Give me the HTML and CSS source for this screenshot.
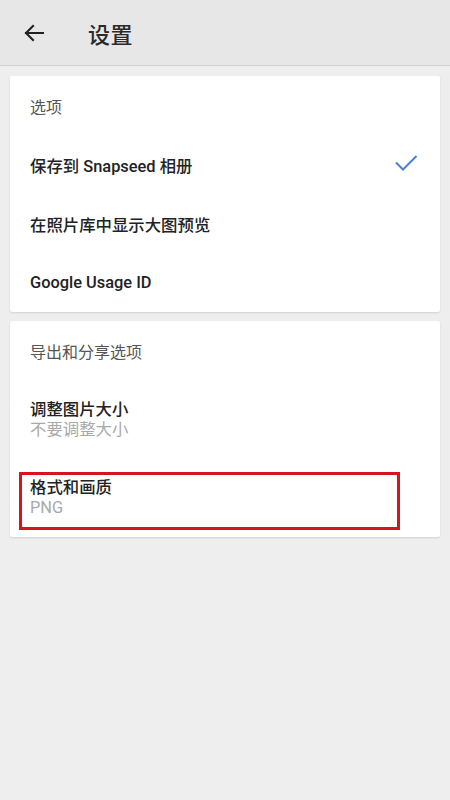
FILE: index.html
```html
<!DOCTYPE html>
<html lang="zh-CN">
<head>
<meta charset="utf-8">
<title>设置</title>
<link rel="stylesheet" href="styles.css">
</head>
<body>
<header class="appbar">
  <svg class="back" width="20" height="18" viewBox="0 0 20 18" aria-hidden="true">
    <path d="M19.5 9H2M9 2L2 9l7 7" fill="none" stroke="#212121" stroke-width="2.1" stroke-linecap="square" stroke-linejoin="miter"/>
  </svg>
  <h1 class="title">设置</h1>
</header>
<main class="content">
  <section class="card">
    <div class="section-head">选项</div>
    <div class="row">
      <span class="row-title">保存到 Snapseed 相册</span>
      <svg class="check" width="24" height="18" viewBox="0 0 24 18" aria-hidden="true">
        <path d="M2 8.5l7 7L22.5 2" fill="none" stroke="#4a7fd4" stroke-width="2"/>
      </svg>
    </div>
    <div class="row"><span class="row-title">在照片库中显示大图预览</span></div>
    <div class="row"><span class="row-title">Google Usage ID</span></div>
  </section>
  <section class="card">
    <div class="section-head">导出和分享选项</div>
    <div class="row two">
      <span class="row-title">调整图片大小</span>
      <span class="row-sub">不要调整大小</span>
    </div>
    <div class="row two last">
      <span class="row-title">格式和画质</span>
      <span class="row-sub">PNG</span>
      <span class="highlight"></span>
    </div>
  </section>
</main>
</body>
</html>
```

FILE: styles.css
```css
html, body {
  margin: 0;
  padding: 0;
}
body {
  background: #eeeeee;
  font-family: Roboto, "Noto Sans CJK SC", "Noto Sans", sans-serif;
  color: #212121;
  width: 450px;
  height: 800px;
}
.appbar {
  height: 65px;
  background: #e7e7e7;
  border-bottom: 1px solid #d2d2d2;
  display: flex;
  align-items: center;
  padding-left: 24px;
  gap: 44px;
}
.back {
  display: block;
  margin-top: 1px;
}
.title {
  margin: 0;
  font-size: 22px;
  font-weight: 500;
  color: #2a2a2a;
  letter-spacing: 0.5px;
}
.content {
  padding: 10px 10px 0;
  display: flex;
  flex-direction: column;
  gap: 9px;
}
.card {
  background: #ffffff;
  border-radius: 2px;
  box-shadow: 0 1px 2px rgba(0,0,0,0.12);
}
.section-head {
  height: 59px;
  display: flex;
  align-items: center;
  padding-left: 20px;
  font-size: 16px;
  color: #555555;
}
.row {
  position: relative;
  height: 59px;
  display: flex;
  align-items: center;
  justify-content: space-between;
  padding: 0 22px 0 20px;
}
.row-title {
  font-size: 16.4px;
  font-weight: 500;
  color: #222222;
}
.check {
  display: block;
  margin-top: -4px;
}
.row.two {
  height: 79px;
  flex-direction: column;
  align-items: flex-start;
  justify-content: center;
  line-height: 20px;
}
.row.two.last {
  height: 78px;
}
.row-sub {
  font-size: 16.4px;
  color: #a9a9a9;
}
.highlight {
  position: absolute;
  left: 9px;
  top: 13px;
  width: 375px;
  height: 52px;
  border: 3px solid #d9131b;
}
```
